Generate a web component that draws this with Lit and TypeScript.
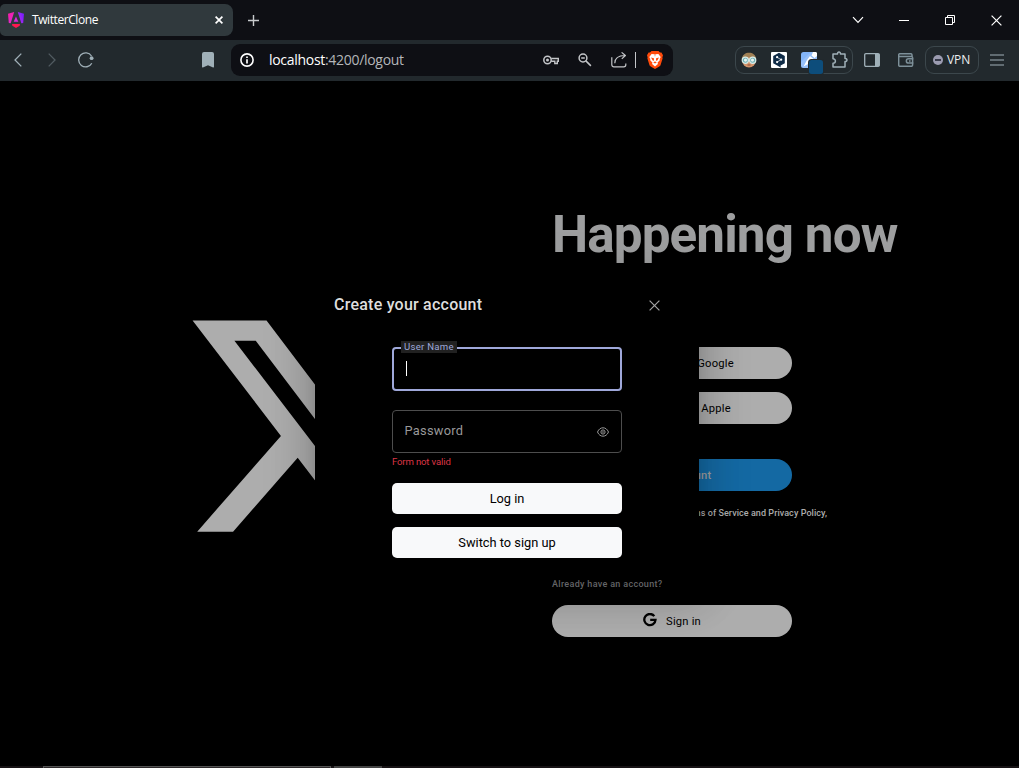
import { LitElement, html, css, svg } from "lit";
import { customElement } from "lit/decorators.js";

const stroke = (w: number, h: number, body: unknown) =>
  html`<svg width=${w} height=${h} viewBox="0 0 ${w} ${h}" fill="none" stroke="currentColor">${body}</svg>`;

const icons = {
  angular: html`<svg width="16" height="16" viewBox="0 0 16 16">
    <defs>
      <linearGradient id="ngl" x1="0" y1="0" x2=".6" y2="1"><stop offset="0" stop-color="#fb1aa0"/><stop offset="1" stop-color="#e02ad0"/></linearGradient>
      <linearGradient id="ngr" x1="1" y1="0" x2="0" y2=".6"><stop offset="0" stop-color="#6a1bff"/><stop offset="1" stop-color="#b22bf0"/></linearGradient>
    </defs>
    <path fill="url(#ngl)" d="M0 1.800 6.200 0 2.700 11.200.8 11z"/>
    <path fill="url(#ngr)" d="M16 1.800 9.800 0l3.500 11.200 1.900-.2z"/>
    <path fill="#dd2ade" d="M8 4.400 10.300 9.800H5.700z"/>
    <path fill="#ff1850" d="M4 12h8l-.3 1.700L8 16l-3.700-2.300z"/></svg>`,
  closeSmall: stroke(8, 8, svg`<path stroke-width="1.7" d="M.6.6l6.8 6.8M7.4.6.6 7.4"/>`),
  plus: stroke(11, 11, svg`<path stroke-width="1.4" d="M5.5 0v11M0 5.5h11"/>`),
  chevron: stroke(12, 8, svg`<path stroke-width="1.2" d="M1 1.2 6 6.4l5-5.2"/>`),
  minimize: stroke(10, 1, svg`<path d="M0 .5h10"/>`),
  restore: stroke(10, 10, svg`<path d="M.5 2.5h7v7h-7zM2.5 2.5v-2h7v7h-2"/>`),
  close: stroke(11, 11, svg`<path stroke-width="1.2" d="M.6.6l9.8 9.8M10.4.6.6 10.4"/>`),
  back: stroke(8, 14, svg`<path stroke-width="1.3" d="M7.3.6 1 7l6.3 6.4"/>`),
  forward: stroke(8, 14, svg`<path stroke-width="1.3" d="M.7.6 7 7 .7 13.4"/>`),
  reload: stroke(16, 16, svg`<path stroke-width="1.3" d="M13.8 11.3A7 7 0 1 1 13.5 4"/><circle cx="13.6" cy="6.2" r="1.9" fill="currentColor" stroke="none"/>`),
  bookmark: html`<svg width="12" height="16" viewBox="0 0 12 16"><path fill="currentColor" d="M2 0h8a2 2 0 0 1 2 2v12.8q0 .9-.9.6L6 13.2.9 15.4q-.9.3-.9-.6V2a2 2 0 0 1 2-2z"/></svg>`,
  info: stroke(14, 14, svg`<circle cx="7" cy="7" r="6.1" stroke-width="1.6"/><path stroke-width="1.7" d="M7 6.2v4.2M7 3.4v1.6"/>`),
  key: stroke(16, 10, svg`<circle cx="4.5" cy="5" r="3.700" stroke-width="1.500"/><circle cx="4.5" cy="5" r="1.5" fill="currentColor" stroke="none"/><path stroke-width="1.400" d="M8.2 3.5h7.100v2.800h-1v2.200h-2.500V6.300H8.2"/>`),
  zoomOut: stroke(14, 14, svg`<circle cx="5" cy="5" r="3.9" stroke-width="1.5"/><path stroke-width="1.5" d="m7.9 7.9 5 5M3.2 5h3.6"/>`),
  share: stroke(16, 16, svg`<path stroke-width="1.2" stroke-linejoin="round" d="M.8 5.2v7.6a2 2 0 0 0 2 2h10a2 2 0 0 0 2-2v-1.3M3.8 11.2c0-4.6 3-7.6 10.2-7.7M10.6.4 14.4 3.5l-3.6 3.4"/>`),
  brave: html`<svg width="16" height="18" viewBox="0 0 16 18">
    <path fill="#ff4b0b" d="M4.5 0h7L13 1.6h1.4L16 4.2l-.6 2 .2 1.2-2.2 7.2Q13 15.4 8 18q-5-2.6-5.4-3.4L.4 7.4.6 6.2 0 4.2l1.6-2.6H3z"/>
    <path fill="#fff" d="M8 3.2 11.4 3l2.3 3.1-1 2 .1 1.1-2.2 2.2.3 1.7L8 15.4l-2.900-2.300.3-1.700-2.200-2.200.1-1.100-1-2L4.600 3z"/>
    <path fill="#ff4b0b" d="m4 6.5 2.900.8.1 2.500-1.300-.2zM12 6.500l-2.900.8-.1 2.500 1.300-.2zM6.200 11.200 8 10.400l1.800.8L8 12.500zM7.500 3.300h1L8 6z"/></svg>`,
  goggles: html`<svg width="16" height="16" viewBox="0 0 16 16">
    <circle cx="8" cy="8.5" r="6.900" fill="#d3946b"/><path fill="#a08055" d="M.8 6.800C1.600 2.600 4.500.8 8 .8s6.400 1.800 7.200 6L12 4.800 8 5.600 4 4.800z"/>
    <circle cx="4.300" cy="8.200" r="3.100" fill="#6fb0b5" stroke="#d9ece9" stroke-width="1.200"/><circle cx="11.700" cy="8.200" r="3.100" fill="#6fb0b5" stroke="#d9ece9" stroke-width="1.200"/>
    <circle cx="4.500" cy="8.100" r="1.600" fill="#e8f3f0"/><circle cx="11.500" cy="8.100" r="1.600" fill="#e8f3f0"/><path stroke="#8d4b36" d="M6.500 13h3"/></svg>`,
  deepl: html`<svg width="16" height="16" viewBox="0 0 16 16"><rect width="16" height="16" rx="1" fill="#fff"/>
    <path fill="#0f2b46" d="m8 .8 5.800 3.300v7.200L9.600 13.600v2L8 14.500l-5.800-3.300V4.100z"/>
    <path fill="none" stroke="#fff" stroke-width=".7" d="M6.200 5.300 10 7.700 6.200 10"/><g fill="#fff"><circle cx="6.100" cy="5.200" r="1.100"/><circle cx="10.200" cy="7.700" r="1.100"/><circle cx="6.100" cy="10.100" r="1.100"/></g></svg>`,
  pen: html`<svg width="23" height="23" viewBox="0 0 23 23"><rect width="16" height="16" rx="2.500" fill="#83b5f8"/>
    <path fill="#b9d5fb" d="M0 10 10 0h3.500A2.500 2.500 0 0 1 16 2.500V8l-8 8H2.500A2.500 2.500 0 0 1 0 13.500z" opacity=".35"/>
    <path fill="#fff" d="M12 0h3l1 1v3l-2.500 2L10.500 3.500zM9 4l3.500 3L8 11.500 2.500 14.500 6 8z"/>
    <rect x="7" y="7" width="16" height="16" rx="3.500" fill="#22292d"/><rect x="8" y="8" width="14" height="14" rx="2.500" fill="#0d4d7b"/></svg>`,
  puzzle: stroke(16, 17, svg`<path stroke-width="1.5" stroke-linejoin="round" d="M1 3h4.500c-.2-2.600 3.200-2.600 3 0H13v4.500c2.600-.2 2.600 3.200 0 3V16H1v-3.700c3.200 0 3.200-4.600 0-4.600z"/>`),
  sidebar: html`<svg width="16" height="14" viewBox="0 0 16 14"><rect x=".7" y=".7" width="14.6" height="12.6" rx="1.2" fill="none" stroke="currentColor" stroke-width="1.3"/><path fill="currentColor" d="M11 1h4.500v12H11z"/></svg>`,
  wallet: stroke(16, 14, svg`<path stroke-width="1.5" d="M14 3.300V2a1.300 1.300 0 0 0-1.300-1.300H2A1.300 1.300 0 0 0 .7 2v10A1.300 1.300 0 0 0 2 13.300h11.300a1.300 1.300 0 0 0 1.300-1.300V4.700a1.300 1.300 0 0 0-1.300-1.300H.8M15.500 5.800h-5a2 2 0 0 0 0 4.300h5M11 8h1.600"/>`),
  menu: stroke(14, 12, svg`<path stroke-width="1.2" d="M0 1h14M0 6h14M0 11h14"/>`),
  eye: stroke(12, 10, svg`<path stroke-width="1" d="M.5 5C1.800 2 3.800.8 6 .8S10.200 2 11.500 5C10.200 8 8.200 9.200 6 9.200S1.800 8 .5 5z"/><circle cx="6" cy="5" r="2.100"/><circle cx="6" cy="5" r=".4"/>`),
  google: html`<svg width="14" height="14" viewBox="0 0 14 14"><path fill="none" stroke="#000" stroke-width="2.300" d="M11.300 3.100A5.600 5.600 0 1 0 12.500 6.900H7.200"/></svg>`,
};

@customElement("browser-chrome")
class BrowserChrome extends LitElement {
  static styles = css`
    :host { display: block; font-family: "Open Sans", "Noto Sans", sans-serif; color: #fff; }
    svg { display: block; flex: none; }
    .tabs { height: 40px; background: #0e0f14; display: flex; align-items: center; }
    .tab { width: 233px; height: 32px; box-sizing: border-box; background: #30393d; border-radius: 5px 8px 8px 5px; display: flex; align-items: center; padding: 0 10px 0 8px; }
    .name { font-size: 12px; margin-left: 8px; flex: 1; letter-spacing: -0.42px; line-height: 16px; }
    .plus { margin-left: 15px; color: #c8cbcd; flex: 1; }
    .win { display: flex; align-items: center; width: 46px; justify-content: center; }
    .win.down { width: 47px; }
    .bar { height: 41px; background: #22292d; display: flex; align-items: center; color: #a0b0b8; }
    .bar > span { margin-top: -1px; }
    .back { margin-left: 14px; } .fwd { margin-left: 26px; color: #515b61; } .reload { margin-left: 22px; }
    .mark { margin-left: 108px; }
    .address { margin-left: 17px; margin-top: -1px; width: 442px; height: 32px; box-sizing: border-box; border-radius: 9px; background: #0e0f14; display: flex; align-items: center; padding: 0 10px 0 9px; color: #c3c5c8; }
    .info { color: #fff; }
    .url { flex: 1; margin-left: 15px; margin-top: -1px; font-size: 14px; color: #b4b6b9; letter-spacing: -0.3px; line-height: 20px; }
    .host { color: #fff; }
    .zoom { margin-left: 19px; } .share { margin-left: 19px; }
    .line { width: 1px; height: 16px; background: #c3c5c8; margin: 0 11px 0 8px; }
    .ext { margin-left: 62px; margin-top: -1px; width: 118px; height: 28px; box-sizing: border-box; border: 1px solid #3c474c; border-radius: 9px; display: flex; align-items: center; padding-left: 5px; }
    .deepl { margin-left: 14px; } .pen { margin: 7px 0 0 14px; } .puz { margin: -2px 0 0 8px; }
    .side { margin-left: 11px; } .wallet { margin-left: 18px; color: #7d9099; }
    .vpn { margin-left: 11px; margin-top: -1px; width: 54px; height: 28px; box-sizing: border-box; border: 1px solid #3c474c; border-radius: 9px; display: flex; align-items: center; padding-left: 7px; color: #eceef0; font-size: 12px; letter-spacing: -0.1px; line-height: 16px; }
    .dot { width: 10px; height: 10px; border-radius: 50%; background: #9b9bb0; display: flex; align-items: center; justify-content: center; margin-right: 4px; }
    .dash { width: 6px; height: 2px; background: #383b4b; }
    .menu { margin-left: 11px; }
  `;
  render() {
    return html`
      <div class="tabs">
        <div class="tab">${icons.angular}<span class="name">TwitterClone</span>${icons.closeSmall}</div>
        <span class="plus">${icons.plus}</span>
        <span class="win down">${icons.chevron}</span><span class="win">${icons.minimize}</span>
        <span class="win">${icons.restore}</span><span class="win">${icons.close}</span>
      </div>
      <div class="bar">
        <span class="back">${icons.back}</span><span class="fwd">${icons.forward}</span>
        <span class="reload">${icons.reload}</span><span class="mark">${icons.bookmark}</span>
        <div class="address">
          <span class="info">${icons.info}</span>
          <span class="url"><span class="host">localhost</span><span>:4200/logout</span></span>
          ${icons.key}<span class="zoom">${icons.zoomOut}</span><span class="share">${icons.share}</span>
          <span class="line"></span>${icons.brave}
        </div>
        <div class="ext">${icons.goggles}<span class="deepl">${icons.deepl}</span><span class="pen">${icons.pen}</span><span class="puz">${icons.puzzle}</span></div>
        <span class="side">${icons.sidebar}</span><span class="wallet">${icons.wallet}</span>
        <div class="vpn"><span class="dot"><span class="dash"></span></span>VPN</div>
        <span class="menu">${icons.menu}</span>
      </div>`;
  }
}

@customElement("login-dialog")
class LoginDialog extends LitElement {
  static styles = css`
    :host { display: block; box-sizing: border-box; width: 384px; height: 300px; background: #000; color: #dedede; font-family: Roboto, sans-serif; padding: 18px 19px 0;
      box-shadow: 0 11px 15px -7px rgba(0,0,0,.2), 0 24px 38px 3px rgba(0,0,0,.14), 0 9px 46px 8px rgba(0,0,0,.12); }
    svg { display: block; }
    .head { display: flex; justify-content: space-between; align-items: center; height: 22px; padding-right: 20px; }
    .title { font-size: 16px; font-weight: 500; letter-spacing: .23px; }
    .x { color: #a3a3a3; margin-top: 3px; }
    .form { width: 230px; margin: 32px 0 0 58px; display: flex; flex-direction: column; }
    .field { height: 43px; box-sizing: border-box; border-radius: 4px; display: flex; align-items: center; position: relative; }
    .user { border: 2px solid #9fa8da; height: 44px; padding: 0 0 2px 12px; }
    .caret { width: 1px; height: 15px; background: #fff; }
    .label { position: absolute; left: 7px; top: -8px; height: 12px; width: 56px; box-sizing: border-box; padding-left: 3px; background: #212121; color: #9fa8da; font-size: 9.6px; line-height: 12px; letter-spacing: .26px; white-space: nowrap; }
    .pass { margin-top: 19px; border: 1px solid #4d4d4d; padding: 0 12px 2px 11.5px; justify-content: space-between; color: #999; font-size: 12.8px; letter-spacing: .27px; }
    .eye { margin-top: 2px; color: #999; }
    .error { color: #dc3545; font-size: 9.6px; line-height: 12px; margin-top: 3px; height: 12px; letter-spacing: -.16px; }
    .btn { height: 31px; background: #f8f9fa; border-radius: 5px; color: #000; font-size: 12.8px; display: flex; align-items: center; justify-content: center; margin-top: 13px; }
    .first { margin-top: 15px; }
  `;
  render() {
    return html`
      <div class="head"><span class="title">Create your account</span><span class="x">${icons.close}</span></div>
      <div class="form">
        <div class="field user"><span class="label">User Name</span><span class="caret"></span></div>
        <div class="field pass"><span>Password</span><span class="eye">${icons.eye}</span></div>
        <div class="error">Form not valid</div>
        <div class="btn first">Log in</div>
        <div class="btn">Switch to sign up</div>
      </div>`;
  }
}

@customElement("app-root")
class AppRoot extends LitElement {
  static styles = css`
    :host { display: flex; flex-direction: column; width: 1019px; height: 768px; overflow: hidden; background: #000; font-family: Roboto, sans-serif; }
    svg { display: block; }
    .page { flex: 1; position: relative; display: grid; grid-template-columns: 552px 1fr; overflow: hidden; }
    .logo { padding: 215px 0 0 179px; }
    .content { display: flex; flex-direction: column; align-items: flex-start; padding-top: 124px; }
    .title { font-size: 51.2px; line-height: 60px; font-weight: 700; color: #9d9e9f; letter-spacing: -0.88px; margin: 0; white-space: nowrap; }
    .pill { width: 240px; height: 32px; box-sizing: border-box; border-radius: 16px; background: #adadad; color: #000; display: flex; align-items: center; justify-content: center; font-size: 11.2px; letter-spacing: .2px; }
    .google { margin-top: 82px; padding-left: 21px; } .apple { margin-top: 13px; padding-left: 22px; }
    .create { margin-top: 35px; background: #1469a3; color: #9d9e9f; font-weight: 500; }
    .terms { font-size: 9px; line-height: 12px; margin-top: 16px; color: #9d9e9f; width: 275px; text-align: right; white-space: nowrap; }
    .b { color: #adadad; font-weight: 500; letter-spacing: .06px; }
    .already { margin-top: 59px; font-size: 9px; line-height: 12px; color: #808285; letter-spacing: .32px; font-weight: 500; }
    .signin { margin-top: 15px; gap: 9px; }
    .g { margin-top: -3px; }
    .dialog { position: absolute; left: 315px; top: 194px; }
    .edge { height: 2px; display: flex; background: #171315; }
    .window { width: 286px; height: 1px; margin-left: 43px; border: 1px solid #555; border-bottom: 0; background: #2d292b; }
    .task { width: 48px; height: 2px; margin-left: 3px; background: #444; }
  `;
  render() {
    return html`
      <browser-chrome></browser-chrome>
      <div class="page">
        <div class="logo"><svg width="260" height="260" viewBox="0 0 24 24"><path fill="#adadad" d="M18.244 2.25h3.308l-7.227 8.26 8.502 11.24H16.17l-5.214-6.817L4.99 21.75H1.68l7.73-8.835L1.254 2.25H8.08l4.713 6.231zm-1.161 17.52h1.833L7.084 4.126H5.117z"/></svg></div>
        <div class="content">
          <h1 class="title">Happening now</h1>
          <div class="pill google">Sign up with Google</div>
          <div class="pill apple">Sign up with Apple</div>
          <div class="pill create">Create account</div>
          <div class="terms">By signing up, you agree to the <span class="b">Terms of Service and Privacy Policy,</span></div>
          <div class="already">Already have an account?</div>
          <div class="pill signin"><span class="g">${icons.google}</span><span>Sign in</span></div>
        </div>
        <login-dialog class="dialog"></login-dialog>
      </div>
      <div class="edge"><div class="window"></div><div class="task"></div></div>`;
  }
}
